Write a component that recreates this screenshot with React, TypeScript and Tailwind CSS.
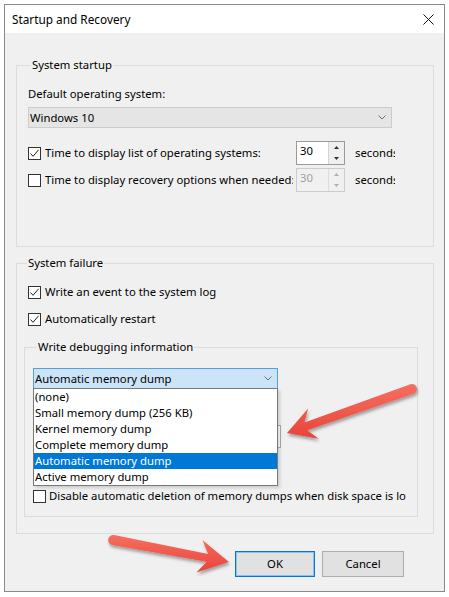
import React from "react";

function Check({ checked }: { checked?: boolean }) {
  return (
    <span className="w-[13px] h-[13px] border border-[#333333] bg-white flex items-center justify-center shrink-0">
      {checked && (
        <svg width="11" height="11" viewBox="0 0 11 11">
          <path d="M1.5 5.5 L4 8.3 L9.6 1.8" fill="none" stroke="#222" strokeWidth="1" />
        </svg>
      )}
    </span>
  );
}

function Chevron() {
  return (
    <svg width="8" height="5" viewBox="0 0 8 5">
      <path d="M0.5 0.5 L4 4 L7.5 0.5" fill="none" stroke="#707070" strokeWidth="1" />
    </svg>
  );
}

function Spin({ disabled, className }: { disabled?: boolean; className?: string }) {
  const tri = disabled ? "#b0b0b0" : "#333333";
  return (
    <div
      className={`flex w-[49px] h-[24px] border ${
        disabled ? "border-[#cccccc] bg-[#f0f0f0] text-[#a0a0a0]" : "border-[#9a9a9a] bg-white text-black"
      } ${className ?? ""}`}
    >
      <div className="flex-1 pl-[3px] pt-[1px] leading-[16px]">30</div>
      <div
        className={`w-[16px] flex flex-col border-l ${
          disabled ? "border-[#dcdcdc] bg-[#f0f0f0]" : "border-[#d4d4d4] bg-[#f0f0f0]"
        }`}
      >
        <div className="flex-1 flex items-center justify-center">
          <svg width="5" height="3" viewBox="0 0 5 3">
            <path d="M0 3 L2.5 0 L5 3Z" fill={tri} />
          </svg>
        </div>
        <div className="flex-1 flex items-center justify-center">
          <svg width="5" height="3" viewBox="0 0 5 3">
            <path d="M0 0 L2.5 3 L5 0Z" fill={tri} />
          </svg>
        </div>
      </div>
    </div>
  );
}

function Group({
  label,
  className,
  labelClass,
  children,
}: {
  label: string;
  className?: string;
  labelClass?: string;
  children: React.ReactNode;
}) {
  return (
    <div className={`border border-[#dcdcdc] ${className ?? ""}`}>
      <div className={`-mt-[9px] w-fit px-[1px] bg-[#f0f0f0] leading-[16px] ${labelClass ?? ""}`}>{label}</div>
      {children}
    </div>
  );
}

type Pt = [number, number];

function arrowPath(tail: Pt, tip: Pt, headLen: number, headHalf: number, neck: number, wHead: number, wTail: number) {
  const dx = tip[0] - tail[0];
  const dy = tip[1] - tail[1];
  const L = Math.hypot(dx, dy);
  const ux = dx / L;
  const uy = dy / L;
  const nx = -uy;
  const ny = ux;
  const P = (a: number, b: number) => `${(tip[0] - ux * a + nx * b).toFixed(2)} ${(tip[1] - uy * a + ny * b).toFixed(2)}`;
  return `M ${P(0, 0)} L ${P(headLen, headHalf)} L ${P(headLen - neck, wHead)} L ${P(L, wTail)} A ${wTail} ${wTail} 0 0 1 ${P(
    L,
    -wTail
  )} L ${P(headLen - neck, -wHead)} L ${P(headLen, -headHalf)} Z`;
}

export default function App() {
  const items = [
    "(none)",
    "Small memory dump (256 KB)",
    "Kernel memory dump",
    "Complete memory dump",
    "Automatic memory dump",
    "Active memory dump",
  ];
  return (
    <div className="relative w-[449px] h-[597px] overflow-hidden bg-white font-['Noto_Sans',sans-serif] text-[11.3px] leading-[16px] text-black">
      <div className="pl-[4px] pt-[4px]">
        <div className="w-[441px] border border-[#8a8a8a] bg-[#f0f0f0]">
          {/* Title bar */}
          <div className="h-[28px] bg-white flex items-center justify-between pl-[7px] pr-[10px]">
            <span className="text-[11.8px]">Startup and Recovery</span>
            <svg width="11" height="11" viewBox="0 0 11 11">
              <path d="M0.5 0.5 L10.5 10.5 M10.5 0.5 L0.5 10.5" stroke="#111" strokeWidth="1" />
            </svg>
          </div>

          {/* Body */}
          <div className="pt-[32px] pl-[11px] pr-[10px] pb-[14px]">
            <Group label="System startup" className="pl-[11px] pb-[54px]" labelClass="ml-[3px]">
              <div className="mt-[13px]">Default operating system:</div>
              <div className="mt-[5px] w-[364px] h-[21px] bg-[#e5e5e5] border border-[#cccccc] flex items-center justify-between pl-[1px] pr-[5px]">
                <span>Windows 10</span>
                <Chevron />
              </div>
              <div className="mt-[13px] flex items-center h-[24px]">
                <Check checked />
                <div className="ml-[4px] w-[248px] overflow-hidden whitespace-nowrap">
                  Time to display list of operating systems:
                </div>
                <Spin className="ml-[3px]" />
                <div className="ml-[10px] w-[40px] overflow-hidden whitespace-nowrap">seconds</div>
              </div>
              <div className="mt-[3px] flex items-center h-[24px]">
                <Check />
                <div className="ml-[4px] w-[248px] overflow-hidden whitespace-nowrap">
                  Time to display recovery options when needed:
                </div>
                <Spin disabled className="ml-[3px]" />
                <div className="ml-[10px] w-[40px] overflow-hidden whitespace-nowrap">seconds</div>
              </div>
            </Group>

            <Group label="System failure" className="mt-[16px] pl-[7px] pr-[15px] pb-[16px]" labelClass="ml-[3px]">
              <div className="mt-[13px] ml-[4px] flex items-center h-[16px]">
                <Check checked />
                <span className="ml-[4px]">Write an event to the system log</span>
              </div>
              <div className="mt-[11px] ml-[4px] flex items-center h-[16px]">
                <Check checked />
                <span className="ml-[4px]">Automatically restart</span>
              </div>

              <Group label="Write debugging information" className="mt-[20px] pl-[8px] pb-[12px]" labelClass="ml-[4px]">
                <div className="relative mt-[13px] w-[245px]">
                  <div className="h-[21px] bg-[#cce4f7] border border-[#569de5] flex items-center justify-between pl-[1px] pr-[5px]">
                    <span>Automatic memory dump</span>
                    <Chevron />
                  </div>
                  <div className="absolute left-0 top-[20px] z-10 w-[245px] border border-[#7a7a7a] bg-white shadow-[2px_2px_3px_rgba(0,0,0,0.15)]">
                    {items.map((t, i) => (
                      <div
                        key={t}
                        className={
                          i === 4
                            ? "h-[16px] pl-[1px] leading-[16px] bg-[#0078d7] text-white whitespace-nowrap"
                            : "h-[16px] pl-[1px] leading-[16px] whitespace-nowrap"
                        }
                      >
                        {t}
                      </div>
                    ))}
                  </div>
                </div>
                <div className="mt-[36px] w-[248px] h-[23px] border border-[#adadad] bg-white" />
                <div className="mt-[40px] flex items-center h-[16px]">
                  <Check />
                  <div className="ml-[3px] w-[357px] overflow-hidden whitespace-nowrap">
                    Disable automatic deletion of memory dumps when disk space is low
                  </div>
                </div>
              </Group>
            </Group>

            <div className="mt-[17px] flex justify-end gap-[7px] pr-[30px]">
              <button className="w-[80px] h-[26px] bg-[#e1e1e1] border border-[#0078d7] shadow-[inset_0_0_0_1px_#8fc0ec] leading-[16px]">
                OK
              </button>
              <button className="w-[82px] h-[26px] bg-[#e1e1e1] border border-[#adadad] leading-[16px]">Cancel</button>
            </div>
          </div>
        </div>
      </div>

      {/* Annotation arrows */}
      <svg className="absolute left-0 top-0 pointer-events-none z-20" width="449" height="597" viewBox="0 0 449 597">
        <defs>
          <linearGradient id="ag" x1="0" y1="0" x2="0" y2="1">
            <stop offset="0" stopColor="#f66f60" />
            <stop offset="1" stopColor="#e8443a" />
          </linearGradient>
          <filter id="sh" x="-20%" y="-20%" width="140%" height="160%">
            <feDropShadow dx="1" dy="2.5" stdDeviation="1.6" floodColor="#000" floodOpacity="0.35" />
          </filter>
        </defs>
        <path d={arrowPath([412, 389], [287, 433], 28, 16, 8, 4, 5)} fill="url(#ag)" filter="url(#sh)" />
        <path d={arrowPath([113, 540], [229, 562], 30, 16.5, 8, 4, 5)} fill="url(#ag)" filter="url(#sh)" />
      </svg>
    </div>
  );
}
